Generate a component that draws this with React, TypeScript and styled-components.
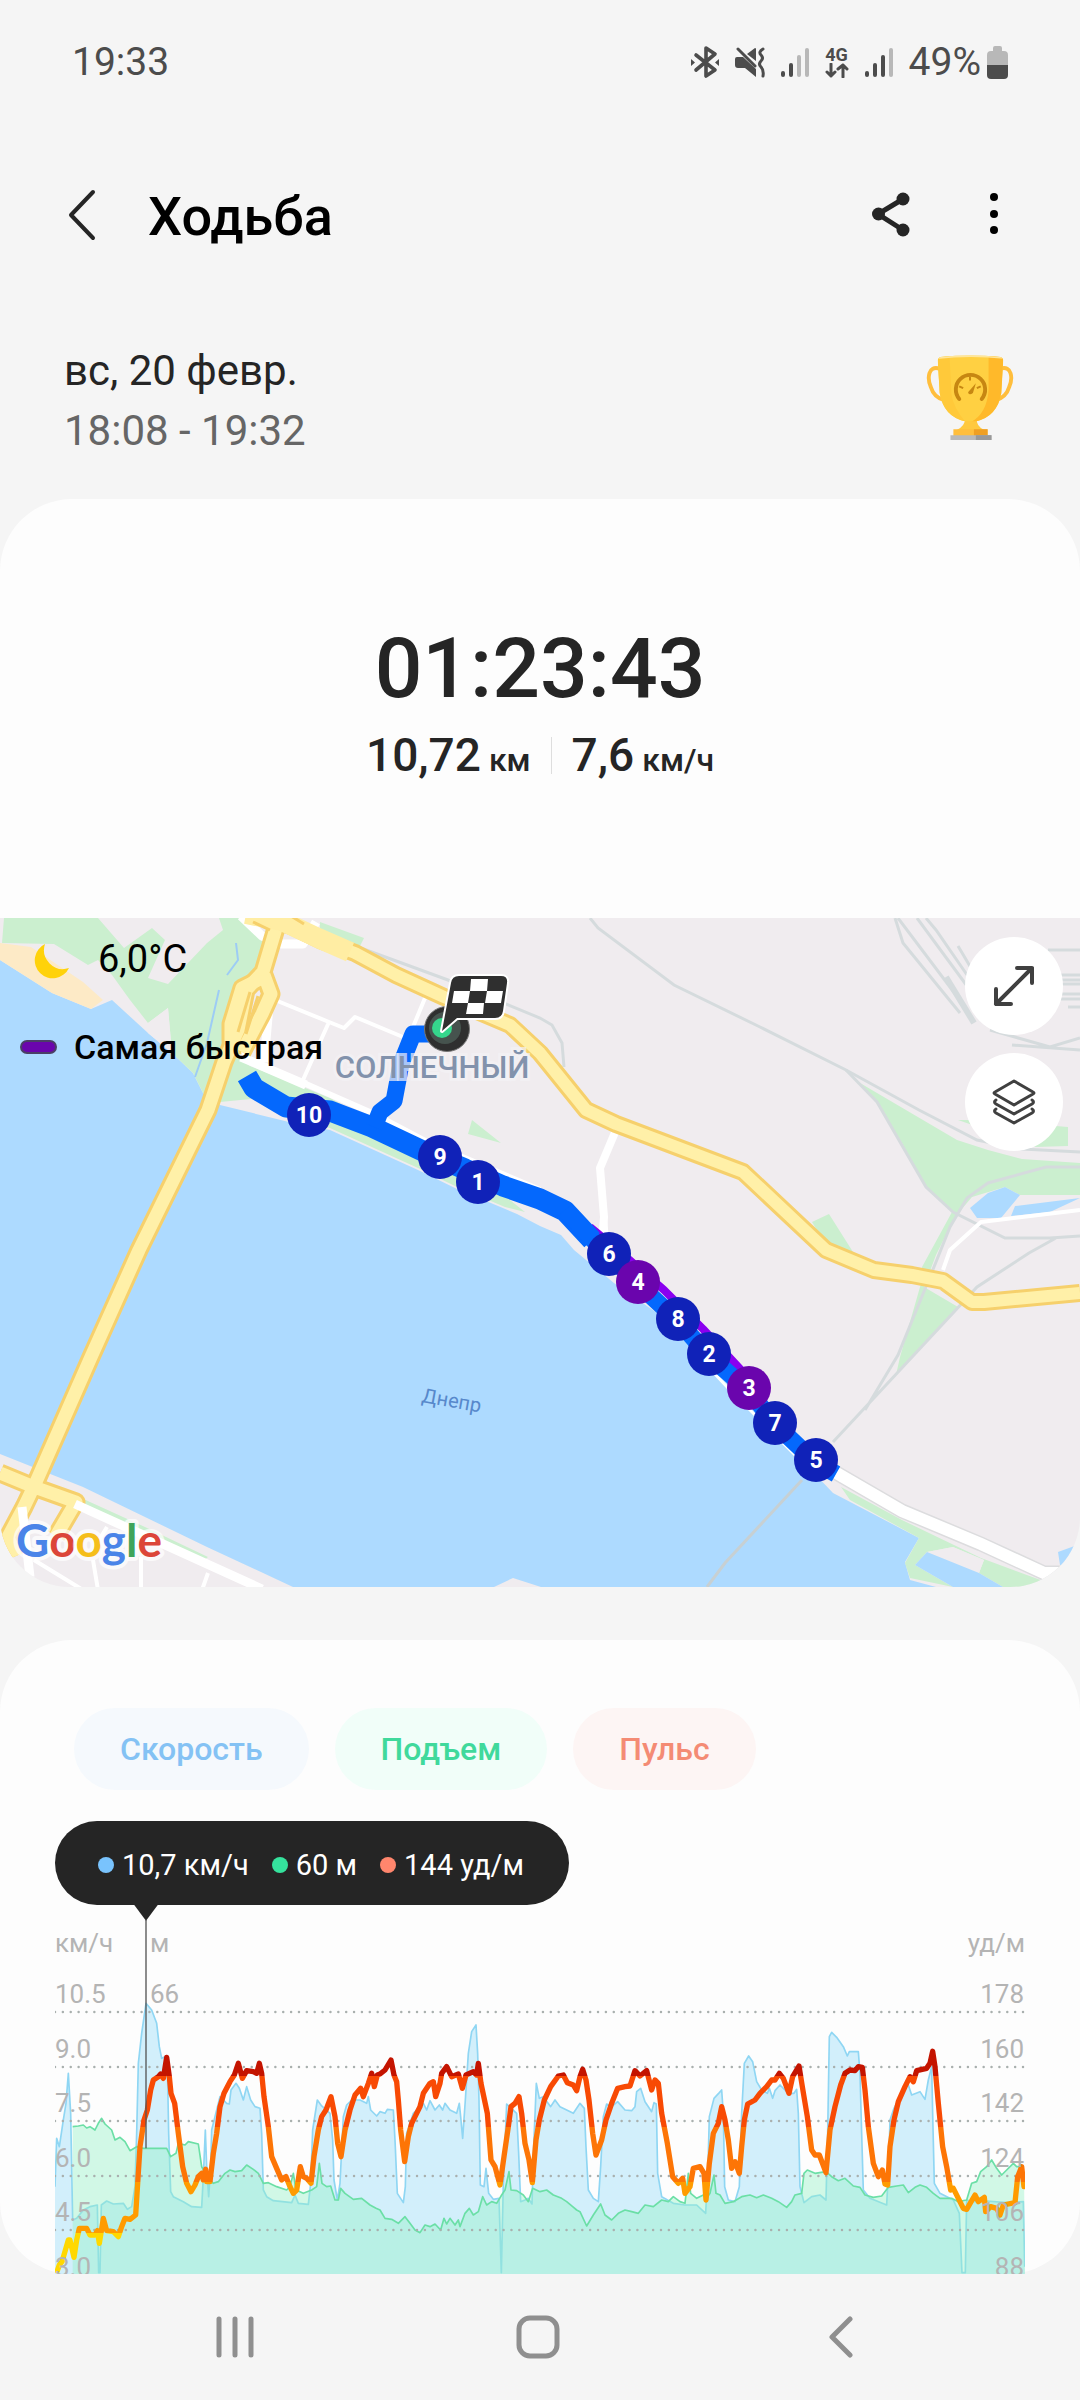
import React from 'react';
import styled, { createGlobalStyle } from 'styled-components';

const GlobalStyle = createGlobalStyle`
  *, *::before, *::after { box-sizing: border-box; }
  body {
    margin: 0;
    background: #f5f5f5;
    font-family: Roboto, "Noto Sans", sans-serif;
    color: #252525;
  }
  button { font: inherit; border: 0; background: none; padding: 0; cursor: pointer; }
  h1, p { margin: 0; }
  svg { display: block; flex: none; }
`;

const Screen = styled.div`
  display: flex;
  flex-direction: column;
  min-height: 100vh;
`;

/* ---------- status bar ---------- */

const StatusBar = styled.div`
  display: flex;
  justify-content: space-between;
  align-items: center;
  height: 124px;
  padding: 0 72px;
  font-size: 39px;
  color: #4c4c4c;
`;

const StatusIcons = styled.div`
  display: flex;
  align-items: center;
  gap: 16px;
`;

const Battery = styled.span`
  display: flex;
  align-items: center;
  gap: 6px;
`;

const Network = styled.span`
  display: flex;
  flex-direction: column;
  align-items: center;
  font-size: 18px;
  line-height: 17px;
  font-weight: 700;
`;

/* ---------- header ---------- */

const Header = styled.header`
  display: flex;
  align-items: center;
  height: 182px;
  padding: 0 82px 0 68px;
`;

const Title = styled.h1`
  flex: 1;
  margin-left: 52px;
  padding-top: 4px;
  font-size: 54px;
  font-weight: 500;
  line-height: 64px;
  color: #000;
`;

const HeaderActions = styled.div`
  display: flex;
  align-items: center;
  gap: 80px;
`;

const Summary = styled.section`
  display: flex;
  justify-content: space-between;
  align-items: flex-start;
  padding: 35px 66px 38px 64px;
  & > svg { margin-top: 14px; }
`;

const DateText = styled.p<{ $muted?: boolean }>`
  font-size: 42px;
  line-height: 60px;
  color: ${(p) => (p.$muted ? '#666' : '#252525')};
`;

/* ---------- result card ---------- */

const ResultCard = styled.section`
  background: #fdfdfd;
  border-radius: 72px 72px 0 0;
  padding: 120px 0 133px;
  display: flex;
  flex-direction: column;
  align-items: center;
  gap: 6px;
  font-weight: 500;
`;

const Duration = styled.p`
  font-size: 84px;
  line-height: 100px;
`;

const Metrics = styled.div`
  display: flex;
  align-items: center;
`;

const Metric = styled.p`
  font-size: 46px;
  line-height: 60px;
  padding: 0 20px;
`;

const Unit = styled.span`
  font-size: 32px;
  line-height: 32px;
  margin-left: 8px;
`;

const Divider = styled.i`
  width: 1px;
  height: 37px;
  background: #dedede;
`;

/* ---------- map card ---------- */

const MapCard = styled.section`
  position: relative;
  overflow: hidden;
  border-radius: 0 0 70px 70px;
  & > svg { width: 100%; height: auto; }
`;

const MapInfo = styled.div`
  position: absolute;
  top: 12px;
  left: 20px;
  display: flex;
  flex-direction: column;
  gap: 30px;
  color: #000;
`;

const Weather = styled.p`
  display: flex;
  align-items: center;
  gap: 28px;
  padding-left: 12px;
  font-size: 38px;
  line-height: 58px;
  & > svg { margin-top: 6px; }
`;

const Legend = styled.p`
  display: flex;
  align-items: center;
  gap: 17px;
  font-size: 34px;
  line-height: 58px;
  font-weight: 500;
  &::before {
    content: '';
    width: 37px;
    height: 14px;
    border-radius: 7px;
    border: 2px solid #4b3f66;
    background: #6a05ad;
  }
`;

const MapButtons = styled.div`
  position: absolute;
  top: 19px;
  right: 17px;
  display: flex;
  flex-direction: column;
  gap: 18px;
`;

const RoundButton = styled.button`
  width: 98px;
  height: 98px;
  border-radius: 50%;
  background: #fff;
  display: grid;
  place-items: center;
`;

/* ---------- chart card ---------- */

const ChartCard = styled.section`
  margin-top: 53px;
  padding-top: 68px;
  background: #fdfdfd;
  border-radius: 72px;
`;

const Chips = styled.div`
  display: flex;
  gap: 26px;
  padding: 0 74px;
`;

const Chip = styled.button<{ $color: string; $background: string }>`
  height: 82px;
  padding: 0 46px;
  border-radius: 41px;
  font-size: 32px;
  font-weight: 500;
  color: ${(p) => p.$color};
  background: ${(p) => p.$background};
`;

const ChartArea = styled.div`
  margin-top: 31px;
  padding: 0 55px;
  & > svg { width: 100%; height: auto; }
`;

const Readout = styled.div`
  display: inline-flex;
  align-items: center;
  gap: 23px;
  height: 84px;
  padding: 4px 45px 0 43px;
  border-radius: 42px;
  background: #252525;
  color: #fff;
  font-size: 29px;
  vertical-align: top;
`;

const ReadoutItem = styled.span<{ $dot: string }>`
  display: flex;
  align-items: center;
  gap: 8px;
  &::before {
    content: '';
    width: 16px;
    height: 16px;
    border-radius: 50%;
    background: ${(p) => p.$dot};
  }
`;

/* ---------- navigation bar ---------- */

const NavBar = styled.nav`
  display: flex;
  align-items: center;
  height: 126px;
  padding: 0 88px 0 84px;
`;

const NavButton = styled.button`
  flex: 1;
  display: grid;
  place-items: center;
  height: 126px;
`;

/* ---------- icons ---------- */

const Signal = ({ level }: { level: number }) => (
  <svg width="28" height="30" viewBox="0 0 28 30" aria-hidden="true">
    {[6, 14, 22, 29].map((h, i) => (
      <rect key={h} x={i * 8} y={30 - h} width="4" height={h} rx="2" fill={i < level ? '#4c4c4c' : '#b8b8b8'} />
    ))}
  </svg>
);

const BluetoothIcon = () => (
  <svg width="28" height="34" viewBox="0 0 28 34" fill="none" stroke="#4c4c4c" strokeWidth="3.600" strokeLinejoin="round" strokeLinecap="round" aria-hidden="true">
    <path d="M5 10l19 15-9 6V3l9 6L5 25" />
    <path d="M0 14l4 3.500-4 3.500zM28 14l-4 3.500 4 3.500z" fill="#4c4c4c" stroke="none" />
  </svg>
);

const MuteIcon = () => (
  <svg width="30" height="34" viewBox="0 0 30 34" aria-hidden="true">
    <path d="M2 12h6l13 12v8L10 23H3q-3 0-3-3v-6q0-2 2-2zM12 9l8-6q1 0 1 1v12z" fill="#4c4c4c" />
    <path d="M3 4l17 17M28 4q-5 3-2 6t0 6q-3 3 0 6t2 9" fill="none" stroke="#4c4c4c" strokeWidth="3" strokeLinecap="round" />
  </svg>
);

const Trophy = () => (
  <svg width="88" height="86" viewBox="0 0 88 88" aria-label="Награда" role="img">
    <defs>
      <clipPath id="cup"><path d="M11 5q0-2 3-3 30-3 61 0 3 1 3 3l-2 34q-4 24-26 29H39Q17 63 13 39z" /></clipPath>
    </defs>
    <path d="M13 14C1 10 0 24 4 33q3 10 13 13M75 14c12-4 13 10 9 19q-3 10-13 13" fill="none" stroke="#ffbe3c" strokeWidth="4" />
    <path d="M39 65h12q-1 8 8 12H30q9-4 9-12z" fill="#ffc93f" />
    <g clipPath="url(#cup)">
      <rect x="8" width="75" height="70" fill="#ffd042" />
      <path d="M63 0h20v70H42q19-8 21-34z" fill="#ffb92a" />
      <path d="M8 0h15l2 40q2 14 14 28H8z" fill="#ffc93a" />
      <path d="M10 2q34-4 70 0v2q-35-4-70 0z" fill="#ffe69a" />
    </g>
    <path d="M33 45A15 15 0 1 1 56 45" fill="none" stroke="#c78712" strokeWidth="4" strokeLinecap="round" />
    <path d="M44 22v4M33 32l4 2M55 32l-4 2" stroke="#c78712" strokeWidth="2" />
    <path d="M50 29l-3 10q-4 3-5-1z" fill="#c78712" />
    <path d="M27 76h35v7H27z" fill="#ffbe3c" />
    <path d="M48 76h14v7H48z" fill="#ef9f23" />
    <path d="M24 82h42v5H24z" fill="#b9b9b9" />
    <path d="M50 82h16v5H50z" fill="#999" />
  </svg>
);

/* ---------- map ---------- */

const pins: { label: string; x: number; y: number; fastest?: boolean }[] = [
  { label: '10', x: 309, y: 1115 },
  { label: '9', x: 440, y: 1157 },
  { label: '1', x: 478, y: 1182 },
  { label: '6', x: 609, y: 1254 },
  { label: '4', x: 638, y: 1282, fastest: true },
  { label: '8', x: 678, y: 1319 },
  { label: '2', x: 709, y: 1354 },
  { label: '3', x: 749, y: 1388, fastest: true },
  { label: '7', x: 775, y: 1423 },
  { label: '5', x: 816, y: 1460 },
];

const mainRoads = [
  'M255 912L293 927L320 940L355 953L396 975L444 997L510 1025L540 1053L586 1110L616 1124L743 1172L826 1250L874 1270L912 1275L943 1281L972 1302L984 1302L1080 1293',
];

const bridgeRoads = [
  'M277 925L263 972L246 990L238 1030L224 1062L208 1110L139 1250L91 1357L36 1482L24 1507L8 1537L16 1556',
  'M262 978L242 988L231 1024L231 1040L232 1055',
  'M264 975L271 994L262 1014L242 1052',
  'M0 1473L34 1487L76 1502L56 1536',
];

const RouteMap = () => (
  <svg viewBox="0 918 1080 669" role="img" aria-label="Маршрут">
    <rect y="918" width="1080" height="669" fill="#f0ecef" />
    <path fill="#addaff" d="M0 960L52 993L91 1009L112 1000L148 1033L172 1053L193 1073L203 1093L220 1105L289 1122L330 1130L418 1170L455 1188L517 1214L540 1226L561 1235L574 1250L614 1283L657 1313L692 1347L728 1383L755 1412L795 1453L833 1493L919 1538L905 1562L910 1580L936 1587H541L513 1578L494 1587H293L207 1547L83 1487L0 1454z" />
    <path fill="#fdeac6" d="M0 943L31 947L83 982L103 1000L91 1009L52 993L0 960z" />
    <g fill="#cbefcf">
      <path d="M2 943L4 918H98L124 948L152 928L165 940L148 978L168 984L207 943L223 930L219 918H245L262 935L276 943L258 970L237 985L222 1030L228 1050L250 1066L330 1098L372 1121L450 1163L500 1192L525 1212L505 1207L455 1186L418 1168L330 1128L289 1119L270 1108L262 1098L220 1102L203 1093L193 1073L172 1053L168 1008L148 1023L130 1000L112 975L98 960L88 965L54 944z" />
      <path d="M472 1120L501 1143L468 1134zM320 922L364 938L360 946L320 932zM812 1222L829 1214L853 1252H830z" />
      <path d="M860 1083L957 1140L988 1150L1022 1159L1080 1163V1195H1020L1005 1187L972 1197L955 1217L936 1255L924 1287L958 1307L896 1375L900 1357L922 1280V1267L952 1212L926 1187L902 1143L877 1103z" />
      <path d="M958 1120H980L1068 1127V1146L1036 1147z" />
      <path d="M841 1487L902 1520L981 1558L1046 1582L1029 1587H1003L979 1573L984 1560L953 1547L927 1552L915 1565L953 1587L910 1578L905 1563L919 1538L850 1500z" />
      <path d="M79 1497L145 1527L208 1557L203 1561L117 1520L77 1502z" />
    </g>
    <path fill="#f0ecef" d="M148 1023L168 1008L172 1053L148 1033zM927 1552L953 1547L984 1560L979 1573z" />
    <path fill="#addaff" d="M927 1552L979 1573L1003 1587H953L915 1565zM1058 1552L1080 1544V1570L1060 1565zM970 1208L988 1193L1005 1187L1020 1195L1001 1218H977zM1015 1206L1080 1198L1050 1212L1011 1216z" />
    <path fill="none" stroke="#9dccf5" strokeWidth="2" d="M236 943L238 960L227 975M219 990L207 1043L195 1077" />

    <g fill="none" stroke="#d5dbdd" strokeWidth="3">
      <path d="M358 947L448 980L540 1018L552 1025L562 1043L564 1067M590 918L598 928L674 985L760 1027L846 1070L919 1110L977 1140L1022 1149L1080 1152" />
      <path d="M846 1070L877 1102L926 1187L953 1212L1005 1238H1050L1080 1236M1080 1167H1046L988 1183L967 1198L950 1227L936 1262L898 1355L865 1410M1056 1238L1029 1253L977 1287L953 1313L833 1442" />
      <path d="M895 918L903 943L960 1013M898 918L962 1003M917 918L970 990M926 918L936 930L974 985M958 946L974 973" />
      <path d="M946 977L974 1023" strokeWidth="6" />
      <path d="M1048 950H1080M1060 975H1080M1060 980H1080M1060 984H1080M1060 994H1080M1060 999H1080M1068 1007H1080M990 1030L1050 1047L1080 1038M1012 1045L1080 1050" />
      <path d="M802 1480L725 1563L707 1587" stroke="#c7d0d3" />
    </g>

    <g fill="none" stroke="#fff" strokeLinejoin="round">
      <path strokeWidth="9" d="M241 916L262 936L282 944L303 944L316 922M270 995L264 1062M252 1025L243 1055M241 1057L306 1085" />
      <path strokeWidth="6" d="M306 1084L372 1113L427 1142L540 1190M616 1130L600 1168L604 1217L606 1240" />
      <path strokeWidth="8" d="M616 1130L600 1168L604 1217L602 1240M590 1232L606 1236" />
      <path strokeWidth="4" d="M275 1000L329 1022L344 1028L355 1017L403 1037M329 1022L303 1080M425 998L413 1027M943 1270L950 1250L981 1222L1080 1210" />
      <path strokeWidth="3" d="M700 1358L728 1388L800 1460" />
    </g>
    <path fill="none" stroke="#dcdcde" strokeWidth="15" d="M833 1471L902 1511L981 1544L1044 1573H1080" />
    <path fill="none" stroke="#fff" strokeWidth="12" d="M833 1471L902 1511L981 1544L1044 1573H1080" />

    <g fill="none" strokeLinejoin="round">
      {mainRoads.map((d) => <path key={d} d={d} stroke="#f6d06c" strokeWidth="18" />)}
      {bridgeRoads.map((d) => <path key={d} d={d} stroke="#f6d06c" strokeWidth="19" />)}
      {mainRoads.map((d) => <path key={d + 'i'} d={d} stroke="#fff0a8" strokeWidth="12" />)}
      {bridgeRoads.map((d) => <path key={d + 'i'} d={d} stroke="#fff0a8" strokeWidth="13" />)}
      <path d="M246 914L282 921L318 938L350 952" stroke="#ffeda3" strokeWidth="20" />
      <path d="M253 922L270 930M291 916L304 924M250 992L238 1032M258 996L246 1034" stroke="#f6d06c" strokeWidth="3" />
      <path d="M75 1504L262 1589M22 1507L30 1577" stroke="#fff" strokeWidth="9" />
      <path d="M34 1560L83 1590M93 1560L98 1590M107 1527L96 1545M141 1557V1590M208 1573L202 1590" stroke="#fff" strokeWidth="4" />
    </g>

    <g fill="none" strokeLinejoin="round">
      <path stroke="#8a00f0" strokeWidth="8" d="M590 1227L618 1250L664 1290L703 1329L742 1371" />
      <path stroke="#0468fd" strokeWidth="21" d="M247 1076L254 1088L286 1107L330 1111L372 1127L427 1153L465 1169L503 1186L540 1199L565 1211L592 1240" />
      <path stroke="#0468fd" strokeWidth="17" d="M565 1210L592 1239L609 1255L638 1284L678 1321L709 1356L749 1391L775 1424L815 1462L836 1474" />
      <path stroke="#0468fd" strokeWidth="17" d="M374 1127L380 1112L394 1101L401 1064L413 1034H436" />
    </g>

    <text x="432" y="1078" textAnchor="middle" fontSize="31" fontWeight="500" fill="#8292ac" stroke="#f4f2f6" strokeOpacity="0.7" strokeWidth="6" paintOrder="stroke">СОЛНЕЧНЫЙ</text>
    <text x="421" y="1402" fontSize="20" fill="#5788cb" transform="rotate(10 421 1402)">Днепр</text>

    <circle cx="447" cy="1029" r="22.500" fill="#2f2f2f" stroke="#777" strokeWidth="1" />
    <circle cx="445" cy="1028" r="16" fill="#46534e" />
    <circle cx="442" cy="1028" r="10" fill="#35d68c" />
    <path d="M459 976H501q7 0 6 7l-4 28q-1 7-8 7H457L442 1031L451 983q1-7 8-7z" fill="#2f2f2f" stroke="#fff" strokeWidth="4" strokeLinejoin="round" paintOrder="stroke" />
    <path d="M471 979H488L487 991H503L501 1003H484L483 1014H466L468 1003H452L454 991H470z" fill="#fff" />
    <path d="M470 991H487L485 1003H468z" fill="#2f2f2f" />

    {pins.map((pin) => (
      <g key={pin.label}>
        <circle cx={pin.x} cy={pin.y} r="22" fill={pin.fastest ? '#6a05ad' : '#1022b8'} />
        <text x={pin.x} y={pin.y + 8} textAnchor="middle" fontSize="23" fontWeight="700" fill="#fff">{pin.label}</text>
      </g>
    ))}

    <text x="16" y="1557" fontFamily="Lato, sans-serif" fontSize="46" fontWeight="700" stroke="#fff" strokeOpacity="0.7" strokeWidth="8" strokeLinejoin="round" paintOrder="stroke">
      <tspan fill="#4a84e8">G</tspan><tspan fill="#dc4639">o</tspan><tspan fill="#f5be1b">o</tspan><tspan fill="#4a84e8">g</tspan><tspan fill="#3fa45a">l</tspan><tspan fill="#dc4639">e</tspan>
    </text>
  </svg>
);

/* ---------- workout chart ---------- */

type Track = [string, string, string];

/* Each track is recorded in three legs; a leg starts 1020 units after the one before it. */
const LEG = 1020;
const toPoints = (track: Track) =>
  track
    .map((leg, i) =>
      leg
        .split(' ')
        .map((pair) => {
          const [x, y] = pair.split(',').map(Number);
          return `${x + i * LEG},${y}`;
        })
        .join(' '),
    )
    .join(' ');

const pulse = toPoints([
  '52,1112 58,1095 66,1085 85,1020 90,1020 102,1072 110,1020 118,985 140,985 150,1005 165,1005 172,992 178,1030 190,955 200,992 220,995 235,1010 245,980 255,955 270,958 287,945 293,850 300,740 312,660 322,630 332,570 340,540 355,530 362,522 370,535 380,472 388,530 393,580 404,610 415,700 428,800 440,850 453,875 465,855 475,830 485,820 490,840 497,808 500,845 510,845 520,760 530,700 540,620 552,580 570,545 583,525 595,490 607,535 620,512 640,515 650,520 658,490 665,520 672,590 685,680 695,770 710,805 725,840 738,830 750,860 760,880 770,870 781,800 790,830 800,835 813,850 822,770 835,690 845,650 858,630 873,590 885,650 893,730 903,770 915,690 930,630 945,585 962,565 970,590 985,550 995,520 1003,560 1012,525',
  '0,522 15,510 33,480 42,525 50,545 55,600 62,690 74,785 85,710 95,670 120,620 130,580 150,550 160,545 167,590 180,550 185,520 200,500 215,530 235,522 247,565 258,525 280,515 290,525 295,490 303,550 322,640 333,780 345,800 360,855 372,770 385,680 393,620 405,610 417,590 425,640 435,730 447,780 457,848 468,720 478,660 493,600 512,560 535,528 550,525 562,548 580,555 590,572 600,530 608,508 618,540 627,600 638,700 648,765 665,720 678,660 695,610 713,565 735,560 750,558 765,512 780,528 800,512 815,570 825,540 835,550 845,640 862,730 878,830 895,850 908,835 915,880 930,860 940,805 960,800 972,820 978,900 988,790 1000,700 1015,670',
  '5,620 15,660 25,720 35,805 45,785 58,820 65,740 73,660 83,612 105,600 120,580 140,560 155,540 165,540 178,520 190,535 207,580 218,530 237,498 247,560 262,650 275,750 285,765 298,765 318,818 330,690 345,620 362,555 375,520 390,510 405,512 415,500 427,502 435,570 445,680 460,790 475,830 487,810 495,852 503,855 510,740 522,660 535,605 555,560 570,530 580,545 590,512 620,505 630,490 638,454 645,500 655,610 668,740 680,800 692,870 700,865 715,895 730,925 740,928 765,885 775,905 793,892 797,935 812,920 830,925 840,945 850,915 885,908 893,830 905,800 912,860',
]);

const speed = toPoints([
  '45,860 50,715 58,740 70,660 78,610 85,520 92,640 98,960 110,955 130,930 150,920 172,915 176,1118 180,1118 184,915 200,903 220,912 250,910 262,928 275,920 285,860 290,700 295,490 305,400 318,310 335,330 350,370 358,440 365,475 375,470 383,540 386,700 392,875 400,890 430,905 455,920 485,922 490,830 496,690 500,800 506,890 512,800 515,690 525,650 540,590 560,610 568,612 573,570 588,550 598,565 610,600 620,560 632,600 645,620 660,625 665,700 670,870 680,890 700,902 755,908 765,885 775,910 805,913 812,850 818,690 832,600 845,618 870,640 878,720 882,840 892,900 900,850 910,650 920,615 935,600 960,600 980,610 985,590 992,630 1010,648',
  '0,635 15,640 22,628 40,630 45,720 52,880 70,908 76,860 80,700 100,640 130,610 140,630 150,602 165,630 178,615 188,630 195,610 210,630 230,640 238,610 242,650 248,715 256,600 265,460 275,395 288,375 293,460 297,600 301,855 312,860 318,805 326,880 340,898 357,895 364,1118 370,850 380,612 410,640 416,760 422,905 435,900 445,895 456,912 461,740 469,550 478,595 490,590 512,620 525,600 540,620 580,640 600,610 613,625 618,740 625,870 640,895 655,905 662,800 670,650 680,612 695,620 713,605 735,630 755,632 765,620 770,575 782,565 795,605 815,635 822,608 829,612 833,820 845,890 880,910 915,915 950,915 977,940 984,800 988,650 1002,595 1018,578',
  '5,570 10,640 14,860 25,900 45,905 58,860 65,640 73,490 86,468 98,485 110,545 125,570 142,580 148,565 158,595 165,572 180,555 205,580 222,580 230,568 235,640 240,860 252,908 275,890 300,885 318,900 323,700 328,410 335,397 350,412 370,440 382,468 388,455 415,455 420,520 425,700 430,870 450,895 500,915 506,800 510,660 522,625 545,580 560,540 575,585 600,575 615,598 625,540 635,500 638,640 643,850 660,880 700,900 718,940 726,1118 736,1118 740,900 755,905 800,903 860,908 910,905 914,1100',
]);

const climb = toPoints([
  '98,680 115,678 130,675 140,684 150,680 165,690 175,670 185,655 195,672 215,690 225,720 240,712 255,725 270,752 290,740 310,745 340,745 380,745 392,770 408,760 415,730 435,735 445,725 475,732 485,800 500,830 520,850 535,845 555,820 570,810 585,815 605,812 620,795 640,808 655,820 670,850 685,848 710,860 740,870 750,860 760,820 768,870 790,880 815,870 830,860 838,790 846,850 860,860 872,858 885,900 895,900 902,865 915,880 940,898 965,895 990,915 1008,925',
  '0,930 15,955 35,958 55,970 75,950 90,970 105,990 120,998 135,975 150,980 165,972 182,990 192,955 200,972 210,955 225,975 235,960 240,980 255,940 268,925 280,945 295,935 308,890 320,915 335,905 350,910 365,885 375,870 387,815 393,870 410,872 430,885 445,905 458,865 480,875 500,870 520,885 545,895 560,905 578,920 590,930 600,935 620,978 640,945 662,912 675,945 695,960 715,940 735,930 755,935 775,940 795,915 820,920 845,900 865,905 880,890 900,905 915,910 925,820 932,880 950,895 970,885 980,895 990,880 1002,825 1008,880',
  '0,885 15,910 40,905 65,890 90,885 110,893 130,885 155,895 175,905 200,922 215,905 225,885 245,880 252,820 262,810 285,820 318,815 335,830 355,842 375,835 400,858 420,862 435,885 460,892 485,888 505,862 530,858 550,855 565,878 585,862 600,855 620,862 640,880 660,895 695,895 715,905 740,900 755,850 770,845 782,815 800,800 815,780 830,805 845,825 860,810 880,790 890,800 912,800',
]);

const zones = [
  { color: '#c41400', from: 0, to: 528 },
  { color: '#f84a04', from: 528, to: 682 },
  { color: '#fd7506', from: 682, to: 846 },
  { color: '#ff9b00', from: 846, to: 1000 },
  { color: '#ffd800', from: 1000, to: 1200 },
];

const rows = [
  { speed: '10.5', pulse: '178', line: 107 },
  { speed: '9.0', pulse: '160', line: 162 },
  { speed: '7.5', pulse: '142', line: 216 },
  { speed: '6.0', pulse: '124', line: 271 },
  { speed: '4.5', pulse: '106', line: 325 },
  { speed: '3.0', pulse: '88', line: 380 },
];

const WorkoutChart = () => (
  <svg viewBox="0 0 970 369" role="img" aria-label="График тренировки">
    <defs>
      <linearGradient id="zones" gradientUnits="userSpaceOnUse" x1="0" y1="0" x2="0" y2="1200">
        {zones.flatMap((z) => [
          <stop key={`${z.color}a`} offset={z.from / 1200} stopColor={z.color} />,
          <stop key={`${z.color}b`} offset={z.to / 1200} stopColor={z.color} />,
        ])}
      </linearGradient>
    </defs>
    <g transform="scale(0.33333) translate(-45 -15)" strokeLinejoin="round">
      <polygon points={`45,1130 ${speed} 2955,1130`} fill="#a8e1f9" fillOpacity="0.5" />
      <polyline points={speed} fill="none" stroke="#8fd6f3" strokeWidth="5" />
      <polygon points={`98,1130 ${climb} 2955,1130`} fill="#93f1c6" fillOpacity="0.42" />
      <polyline points={climb} fill="none" stroke="#6bdfa6" strokeWidth="5" />
    </g>
    {rows.map((row) => (
      <line key={row.speed} x1="0" x2="970" y1={row.line} y2={row.line} stroke="#a9b0ae" strokeWidth="2.500" strokeLinecap="round" strokeDasharray="0 7.870" />
    ))}
    <g transform="scale(0.33333) translate(-45 -15)">
      <polyline points={pulse} fill="none" stroke="url(#zones)" strokeWidth="16" strokeLinejoin="round" strokeLinecap="round" />
      <path d="M318 60V745" stroke="#555" strokeWidth="4" />
      <path d="M282 14H354L318 62z" fill="#252525" />
    </g>
    <g fontSize="26" fill="#b4b4b4">
      <text x="0" y="47">км/ч</text>
      <text x="95" y="47">м</text>
      <text x="95" y="98">66</text>
      <text x="970" y="47" textAnchor="end">уд/м</text>
      {rows.map((row) => (
        <React.Fragment key={row.speed}>
          <text x="0" y={row.line - 9}>{row.speed}</text>
          <text x="969" y={row.line - 9} textAnchor="end">{row.pulse}</text>
        </React.Fragment>
      ))}
    </g>
  </svg>
);

/* ---------- page ---------- */

export default function App() {
  return (
    <Screen>
      <GlobalStyle />
      <StatusBar>
        <span>19:33</span>
        <StatusIcons>
          <BluetoothIcon />
          <MuteIcon />
          <Signal level={2} />
          <Network>
            4G
            <svg width="24" height="15" viewBox="0 0 24 15" fill="none" stroke="#4c4c4c" strokeWidth="3" strokeLinecap="round" strokeLinejoin="round" aria-hidden="true">
              <path d="M6 1v12M2 9l4 4 4-4M18 14V2M13 6l5-4 4 4" />
            </svg>
          </Network>
          <Signal level={3} />
          <Battery>
            49%
            <svg width="21" height="33" viewBox="0 0 21 33" aria-hidden="true">
              <path d="M6 2q0-2 2-2h5q2 0 2 2v3h2q4 0 4 4v10H0V9q0-4 4-4h2z" fill="#b8b8b8" />
              <path d="M0 19h21v10q0 4-4 4H4q-4 0-4-4z" fill="#4c4c4c" />
            </svg>
          </Battery>
        </StatusIcons>
      </StatusBar>

      <Header>
        <button type="button" aria-label="Назад">
          <svg width="28" height="52" viewBox="0 0 28 52" fill="none" stroke="#252525" strokeWidth="4" strokeLinecap="round" strokeLinejoin="round">
            <path d="M25 3L3 26l22 23" />
          </svg>
        </button>
        <Title>Ходьба</Title>
        <HeaderActions>
          <button type="button" aria-label="Поделиться">
            <svg width="38" height="46" viewBox="0 0 38 46" fill="#252525">
              <path d="M31 7L6 22l25 16" fill="none" stroke="#252525" strokeWidth="5" />
              <circle cx="31" cy="7" r="6.500" /><circle cx="6.500" cy="22" r="6.500" /><circle cx="31" cy="38" r="6.500" />
            </svg>
          </button>
          <button type="button" aria-label="Ещё">
            <svg width="8" height="46" viewBox="0 0 8 46">
              <circle cx="4" cy="5" r="4" /><circle cx="4" cy="22" r="4" /><circle cx="4" cy="38" r="4" />
            </svg>
          </button>
        </HeaderActions>
      </Header>

      <Summary>
        <div>
          <DateText>вс, 20 февр.</DateText>
          <DateText $muted>18:08 - 19:32</DateText>
        </div>
        <Trophy />
      </Summary>

      <ResultCard>
        <Duration>01:23:43</Duration>
        <Metrics>
          <Metric>10,72<Unit>км</Unit></Metric>
          <Divider />
          <Metric>7,6<Unit>км/ч</Unit></Metric>
        </Metrics>
      </ResultCard>

      <MapCard>
        <RouteMap />
        <MapInfo>
          <Weather>
            <svg width="38" height="38" viewBox="0 0 38 38" aria-hidden="true">
              <path d="M13 1A18 18 0 1 0 37 25A19 19 0 0 1 13 1z" fill="#ffd20a" />
            </svg>
            6,0°C
          </Weather>
          <Legend>Самая быстрая</Legend>
        </MapInfo>
        <MapButtons>
          <RoundButton type="button" aria-label="Развернуть карту">
            <svg width="42" height="42" viewBox="0 0 42 42" fill="none" stroke="#404040" strokeWidth="4" strokeLinecap="round" strokeLinejoin="round">
              <path d="M3 39L39 3M24 3h15v15M3 24v15h15" />
            </svg>
          </RoundButton>
          <RoundButton type="button" aria-label="Слои карты">
            <svg width="44" height="46" viewBox="0 0 44 46" fill="none" stroke="#404040" strokeWidth="3" strokeLinecap="round" strokeLinejoin="round">
              <path d="M22 2L41 13q2 1 0 2L22 26L3 15q-2-1 0-2zM4 21q-3 2 0 4l18 10 18-10q3-2 0-4M4 30q-3 2 0 4l18 10 18-10q3-2 0-4" />
            </svg>
          </RoundButton>
        </MapButtons>
      </MapCard>

      <ChartCard>
        <Chips>
          <Chip type="button" $color="#84c2f4" $background="#f5f9fd">Скорость</Chip>
          <Chip type="button" $color="#40d99c" $background="#f1fef9">Подъем</Chip>
          <Chip type="button" $color="#f48b74" $background="#fdf5f4">Пульс</Chip>
        </Chips>
        <ChartArea>
          <Readout>
            <ReadoutItem $dot="#79c3fd">10,7 км/ч</ReadoutItem>
            <ReadoutItem $dot="#35e29d">60 м</ReadoutItem>
            <ReadoutItem $dot="#ff866d">144 уд/м</ReadoutItem>
          </Readout>
          <WorkoutChart />
        </ChartArea>
      </ChartCard>

      <NavBar>
        <NavButton type="button" aria-label="Недавние">
          <svg width="40" height="42" viewBox="0 0 40 42" stroke="#8f8f8f" strokeWidth="5" strokeLinecap="round">
            <path d="M4 3v36M20 3v36M36 3v36" />
          </svg>
        </NavButton>
        <NavButton type="button" aria-label="Главный экран">
          <svg width="44" height="44" viewBox="0 0 44 44" fill="none" stroke="#8f8f8f" strokeWidth="5">
            <rect x="3" y="3" width="38" height="38" rx="11" />
          </svg>
        </NavButton>
        <NavButton type="button" aria-label="Назад">
          <svg width="26" height="42" viewBox="0 0 26 42" fill="none" stroke="#8f8f8f" strokeWidth="5" strokeLinecap="round" strokeLinejoin="round">
            <path d="M22 3L4 21l18 18" />
          </svg>
        </NavButton>
      </NavBar>
    </Screen>
  );
}
